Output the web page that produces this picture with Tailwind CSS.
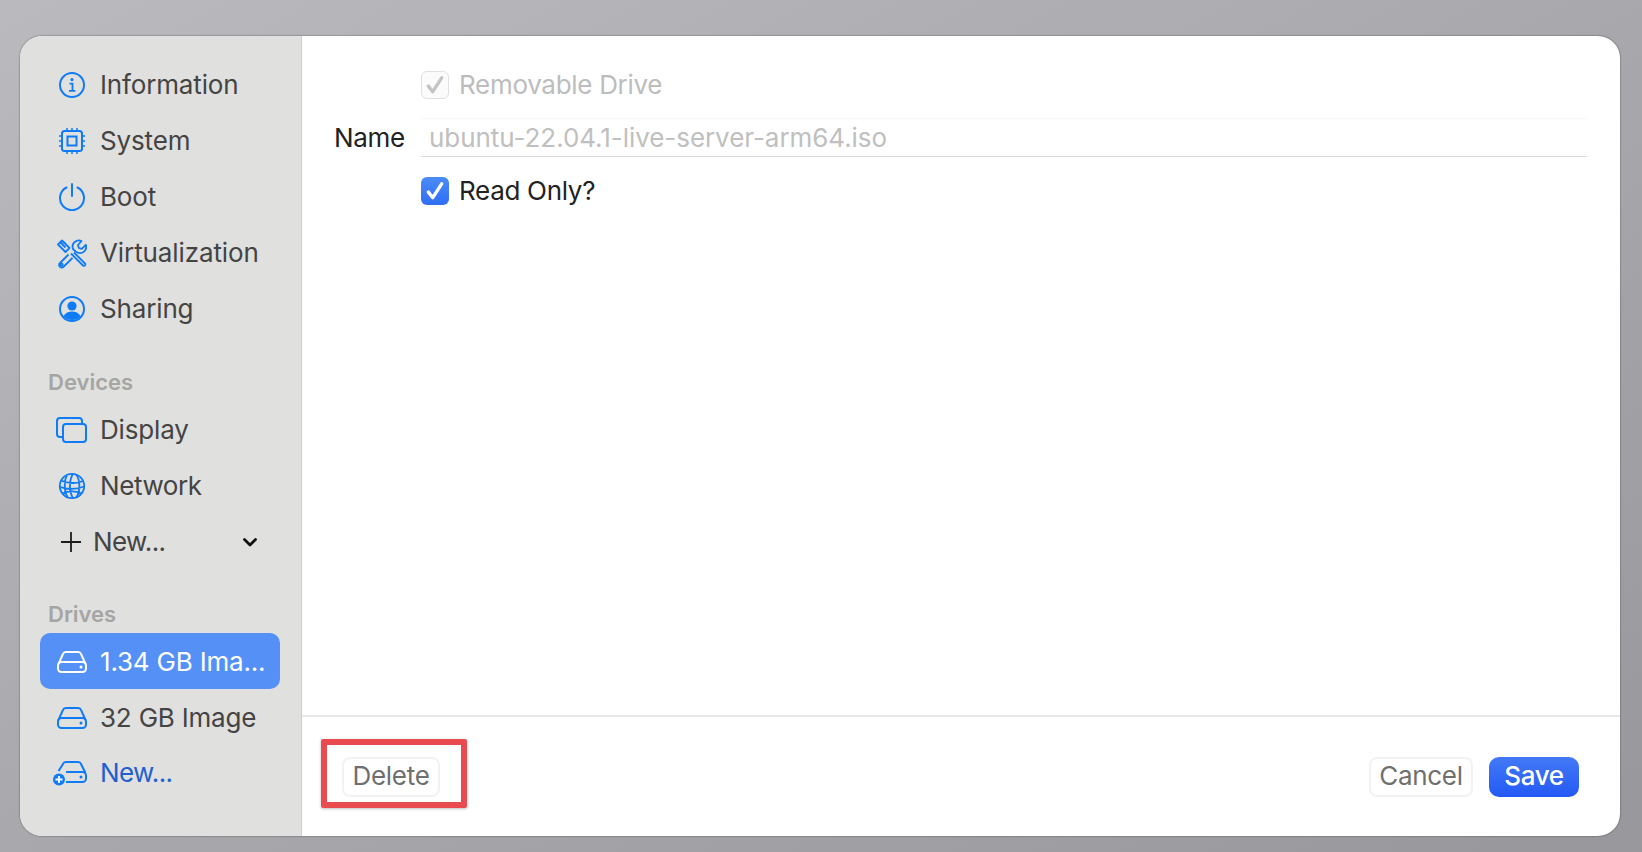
<!DOCTYPE html>
<html><head><meta charset="utf-8"><script src="https://cdn.jsdelivr.net/npm/@tailwindcss/browser@4"></script></head>
<body class="m-0 w-[1642px] h-[852px] overflow-hidden font-['Inter',sans-serif] bg-gradient-to-br from-[#b9b9be] to-[#98989c]">
<div class="ml-[20px] mt-[36px] w-[1600px] h-[800px] rounded-[22px] overflow-hidden flex bg-white shadow-[0_0_2px_rgba(0,0,0,0.55)]">
  <aside class="w-[282px] h-full shrink-0 bg-[#e0e0de] border-r border-[#cfcfcd] pt-[21px] flex flex-col text-[26px] tracking-[-0.15px] text-[#444444] leading-none">
    <div class="h-[56px] flex items-center pl-[38px] gap-[14px]">
      <svg class="w-[28px] h-[28px] shrink-0" viewBox="0 0 28 28" fill="none" stroke="#0f7bf5" stroke-width="2"><circle cx="14" cy="14" r="12"/><circle cx="14" cy="8.6" r="1.6" fill="#0f7bf5" stroke="none"/><path d="M11.5 12.6h3v7M11 19.8h6.4" stroke-width="1.8"/></svg>
      <span>Information</span></div>
    <div class="h-[56px] flex items-center pl-[38px] gap-[14px]">
      <svg class="w-[28px] h-[28px] shrink-0" viewBox="0 0 28 28" fill="none" stroke="#0f7bf5" stroke-width="2"><rect x="4" y="4" width="20" height="20" rx="2.5"/><rect x="9.5" y="9.5" width="9" height="9"/><path d="M9 1v2.5M14 1v2.5M19 1v2.5M9 24.5V27M14 24.5V27M19 24.5V27M1 9h2.500M1 14h2.500M1 19h2.500M24.500 9H27M24.500 14H27M24.500 19H27" stroke-width="1.500"/></svg>
      <span>System</span></div>
    <div class="h-[56px] flex items-center pl-[38px] gap-[14px]">
      <svg class="w-[28px] h-[28px] shrink-0" viewBox="0 0 28 28" fill="none" stroke="#0f7bf5" stroke-width="2" stroke-linecap="round"><path d="M8.500 4.500a12 12 0 1 0 11 0"/><path d="M14 1v12"/></svg>
      <span>Boot</span></div>
    <div class="h-[56px] flex items-center pl-[36px] gap-[14px]">
      <svg class="w-[31px] h-[31px] shrink-0" viewBox="0 0 31 31" fill="none" stroke="#0f7bf5" stroke-width="1.800" stroke-linejoin="round"><path d="M2 6.500 6 2.500l7.500 7.500-4 4z"/><path d="M4.500 4.500l5 5M7 3.500l2 2"/><path d="M12.500 16.500 4 25c-1.500 1.500-1 3 0 3.800 1 .9 2.500 1 3.800-.3l8.700-8.500"/><circle cx="5.500" cy="26.500" r="1.200"/><path d="M19.500 13.500 17 11c-1-3 0-6 2.500-7.500 2-1.200 4.500-1.200 6-.5L22 7l.8 3 3 .8 4-4c.7 2 .3 4.800-1.500 6.500-2 1.800-4.500 2.200-6.800 1.200z"/><path d="M15 15.500 27 27.500c.6.600 1.500.500 2-.1.500-.5.600-1.300 0-1.900L18 14.500"/></svg>
      <span class="-ml-[1px] tracking-[-0.1px]">Virtualization</span></div>
    <div class="h-[56px] flex items-center pl-[38px] gap-[14px]">
      <svg class="w-[28px] h-[28px] shrink-0" viewBox="0 0 28 28" fill="none" stroke="#0f7bf5" stroke-width="2"><circle cx="14" cy="14" r="12"/><circle cx="14" cy="11" r="4.600" fill="#0f7bf5" stroke="none"/><path d="M5.500 21c2-3.200 5-4.500 8.500-4.500s6.500 1.300 8.500 4.500c-2 2.500-5 4-8.500 4s-6.500-1.500-8.500-4z" fill="#0f7bf5" stroke="none"/></svg>
      <span>Sharing</span></div>
    <div class="mt-[30px] h-[30px] pl-[28px] flex items-center text-[22px] font-semibold tracking-normal text-[#a5a5a4]">Devices</div>
    <div class="mt-[5px] h-[56px] flex items-center pl-[36px] gap-[13px]">
      <svg class="w-[31px] h-[26px] shrink-0" viewBox="0 0 31 26" fill="none" stroke="#0f7bf5" stroke-width="2"><path d="M7 20H4a3 3 0 0 1-3-3V4a3 3 0 0 1 3-3h19a3 3 0 0 1 3 3v3"/><rect x="7" y="7" width="23" height="18" rx="3"/></svg>
      <span>Display</span></div>
    <div class="h-[56px] flex items-center pl-[38px] gap-[14px]">
      <svg class="w-[28px] h-[28px] shrink-0" viewBox="0 0 28 28" fill="none" stroke="#0f7bf5" stroke-width="1.800"><circle cx="14" cy="14" r="12.200"/><path d="M9 3.500C6 8 6 20 9.500 25M18 2.500c4.500 5 4.500 18 0 23M15 2c-4 6-4 18 0 24M3 8.500c6 3 16 3.500 22 .5M2 15c7 2.500 17 2.500 24-.500M4 21.500c6-2.500 14-2.500 20 0"/></svg>
      <span class="tracking-[-0.4px]">Network</span></div>
    <div class="h-[56px] flex items-center pl-[41px] pr-[44px]">
      <svg class="w-[20px] h-[20px] shrink-0" viewBox="0 0 20 20" fill="none" stroke="#1c1c1c" stroke-width="1.800"><path d="M10 0v20M0 10h20"/></svg>
      <span class="ml-[12px] tracking-[-0.6px]">New...</span>
      <svg class="ml-auto w-[14px] h-[9px]" viewBox="0 0 14 9" fill="none" stroke="#111" stroke-width="2.800" stroke-linecap="round" stroke-linejoin="round"><path d="M1.500 1.500 7 7l5.500-5.500"/></svg></div>
    <div class="mt-[29px] h-[30px] pl-[28px] flex items-center text-[22px] font-semibold tracking-normal text-[#a5a5a4]">Drives</div>
    <div class="ml-[20px] w-[240px] mt-[4px] h-[56px] pt-[1px] rounded-[10px] bg-[#5590f6] text-white flex items-center pl-[17px] gap-[13px]">
      <svg class="w-[30px] h-[22px] shrink-0" viewBox="0 0 30 22" fill="none" stroke="#fff" stroke-width="2"><path d="M1.500 13 6 3a3 3 0 0 1 2.800-2h12.400A3 3 0 0 1 24 3l4.500 10"/><rect x="1" y="11" width="28" height="10" rx="3.500"/><circle cx="24" cy="16" r="1.500" fill="#fff" stroke="none"/></svg>
      <span class="whitespace-nowrap tracking-[-0.2px]">1.34 GB Ima...</span></div>
    <div class="mt-[1px] h-[56px] flex items-center pl-[37px] gap-[13px]">
      <svg class="w-[30px] h-[22px] shrink-0" viewBox="0 0 30 22" fill="none" stroke="#0f7bf5" stroke-width="2"><path d="M1.500 13 6 3a3 3 0 0 1 2.800-2h12.400A3 3 0 0 1 24 3l4.500 10"/><rect x="1" y="11" width="28" height="10" rx="3.500"/><circle cx="24" cy="16" r="1.500" fill="#0f7bf5" stroke="none"/></svg>
      <span class="tracking-[-0.2px]">32 GB Image</span></div>
    <div class="h-[54px] flex items-center pl-[33px] gap-[13px]">
      <svg class="w-[34px] h-[25px] shrink-0" viewBox="0 0 34 25" fill="none" stroke="#0f7bf5" stroke-width="2"><path d="M5.500 10 10 3a3 3 0 0 1 2.800-2h12.400A3 3 0 0 1 28 3l4.500 9"/><path d="M13 11h16.500a3.500 3.500 0 0 1 3.500 3.500v3a3.500 3.500 0 0 1-3.500 3.500H13"/><circle cx="28" cy="16" r="1.500" fill="#0f7bf5" stroke="none"/><circle cx="6" cy="18.500" r="6" fill="#0f7bf5" stroke="none"/><path d="M6 15v7M2.500 18.500h7" stroke="#fff" stroke-width="1.800"/></svg>
      <span class="text-[#1f5fd0] tracking-[-0.6px]">New...</span></div>
  </aside>
  <main class="flex-1 flex flex-col text-[26px] tracking-[-0.3px] leading-none">
    <div class="flex-1 pl-[32px] pr-[33px] pt-[35px] flex flex-col">
      <div class="h-[28px] pl-[87px] flex items-center gap-[10px] text-[#bdbdbd]">
        <span class="w-[28px] h-[28px] rounded-[6px] border border-[#e0e0e0] bg-[#fbfbfb] flex items-center justify-center"><svg class="w-[20px] h-[20px]" viewBox="0 0 18 18" fill="none" stroke="#c4c4c4" stroke-width="3" stroke-linecap="round" stroke-linejoin="round"><path d="M3 10l4 5L15 2.500"/></svg></span>
        <span>Removable Drive</span></div>
      <div class="mt-[19px] h-[39px] flex items-center">
        <span class="w-[70px] text-right text-[#222222]">Name</span>
        <div class="ml-[17px] flex-1 h-full border-b border-[#dcdcdc] border-t border-t-[#f7f7f7] flex items-center pl-[8px] text-[#c0c0c0] tracking-[-0.06px]">ubuntu-22.04.1-live-server-arm64.iso</div></div>
      <div class="mt-[20px] h-[28px] pl-[87px] flex items-center gap-[10px] text-[#222222]">
        <span class="w-[28px] h-[28px] rounded-[6px] bg-gradient-to-b from-[#4b8bf8] to-[#2f6ef5] flex items-center justify-center"><svg class="w-[20px] h-[20px]" viewBox="0 0 18 18" fill="none" stroke="#fff" stroke-width="3" stroke-linecap="round" stroke-linejoin="round"><path d="M3 10l4 5L15 2.500"/></svg></span>
        <span>Read Only?</span></div>
    </div>
    <footer class="h-[121px] shrink-0 border-t-2 border-[#e8e8e8] pl-[40px] pr-[41px] flex items-center">
      <div class="relative w-[98px] h-[40px] pb-[2px] rounded-[8px] border-2 border-[#f2f2f2] bg-white flex items-center justify-center text-[#6f6f6f]">Delete
        <div class="absolute -left-[23px] -top-[20px] w-[146px] h-[69px] border-[6px] border-[#e84b50] rounded-[2px] shadow-[0_1px_3px_rgba(0,0,0,0.25)]"></div></div>
      <div class="ml-auto w-[104px] h-[40px] pb-[2px] rounded-[8px] border-2 border-[#f2f2f2] bg-white flex items-center justify-center text-[#6f6f6f]">Cancel</div>
      <div class="ml-[16px] w-[90px] h-[40px] pb-[2px] rounded-[10px] bg-gradient-to-b from-[#4379f6] to-[#2458f5] flex items-center justify-center text-white font-medium">Save</div>
    </footer>
  </main>
</div>
</body></html>
